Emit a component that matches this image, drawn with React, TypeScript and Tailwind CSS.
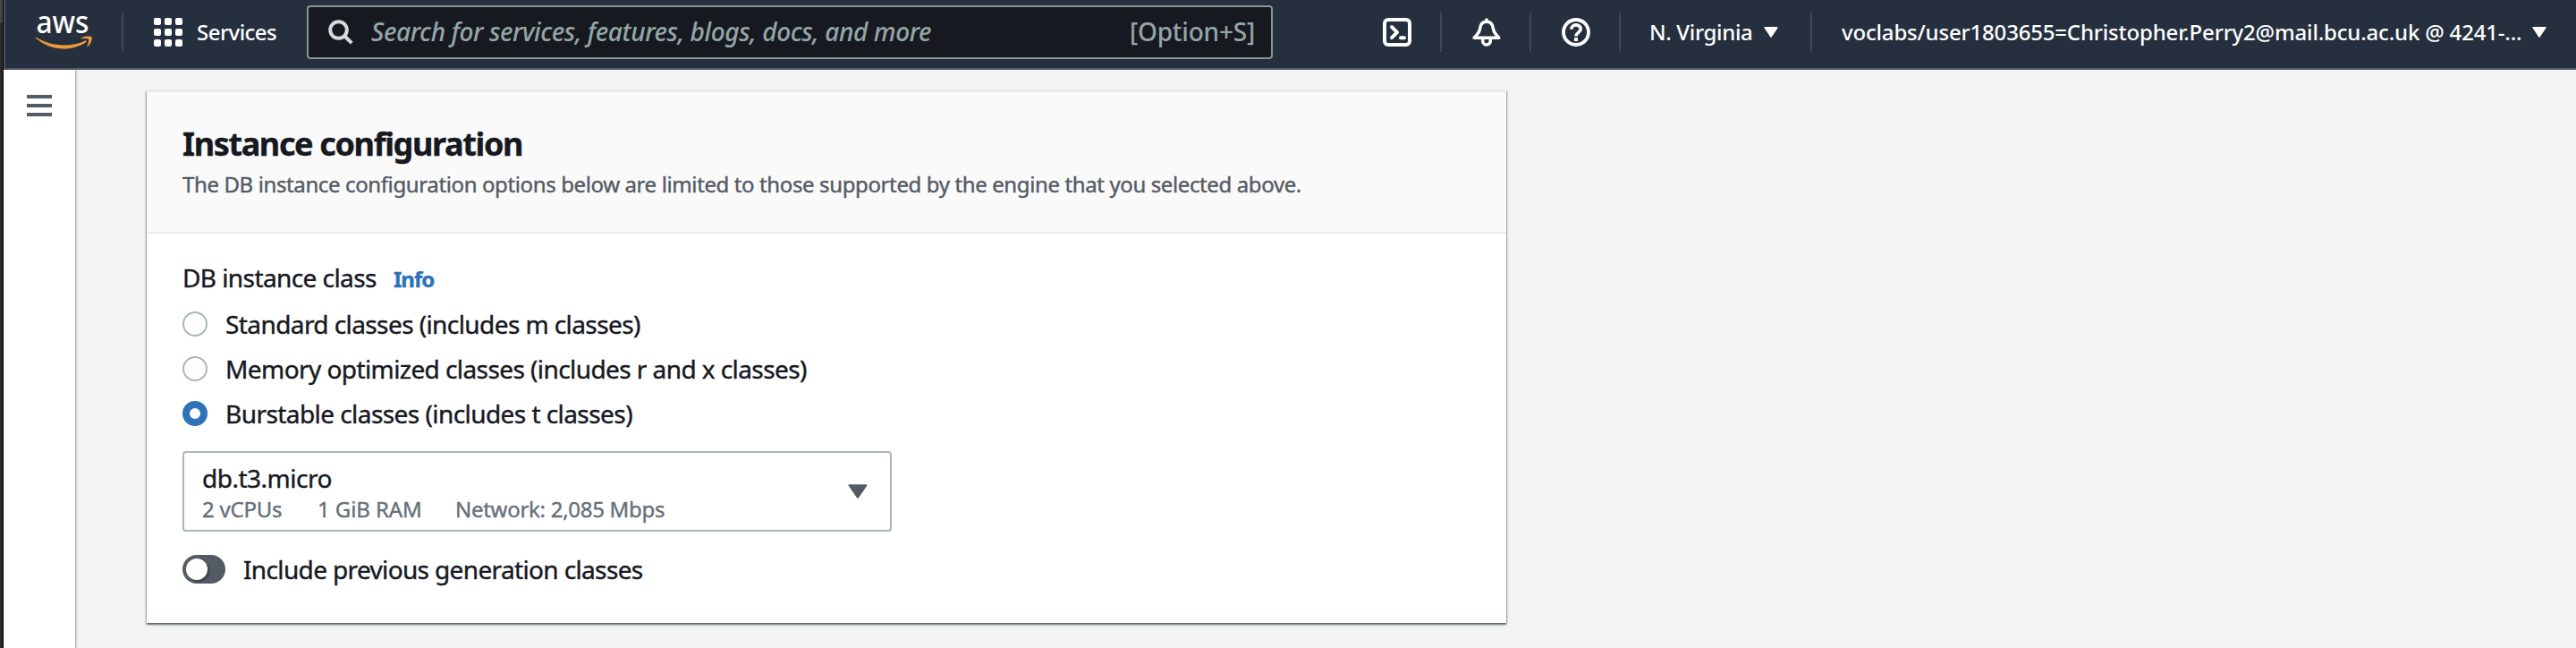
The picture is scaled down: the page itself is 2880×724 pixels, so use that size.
import React from "react";

function Divider() {
  return <div className="h-11 w-[2px] shrink-0 bg-[#414750]" />;
}

function Caret({ className }: { className: string }) {
  return (
    <svg viewBox="0 0 16 12" preserveAspectRatio="none" className={className} fill="currentColor" stroke="currentColor" strokeWidth="1.6" strokeLinejoin="round">
      <path d="M1.2 .9h13.6L8 11z" />
    </svg>
  );
}

function AwsLogo() {
  return (
    <svg viewBox="0 0 68 48" className="h-12 w-[68px] shrink-0 overflow-visible">
      <text x="2.4" y="24.500" textLength="59" lengthAdjust="spacingAndGlyphs" fontSize="34" fill="#fff" className="font-['Noto_Sans',sans-serif] font-medium">
        aws
      </text>
      <path d="M2.3 29.800C12 35.600 22.500 38.400 34 38.400c8 0 16-1.700 23.300-5 1.200-.5 2.100.8 1 1.700C51.500 40 42 42.600 33.500 42.600c-12.300 0-23.200-4.700-31.600-12-.6-.6 0-1.200.4-.8z" fill="#ec9b3b" />
      <path d="M61 32c-1-1.300-6-1.100-7.900-.7-.6.1-.7-.5-.2-.9 3.300-2.500 10.500-2.200 11.600-1.100 1 1.200-.6 7.900-4.300 10.800-.5.5-1 .2-.8-.4.900-2.200 2.400-6.700 1.600-7.700z" fill="#ec9b3b" />
    </svg>
  );
}

function AppsGrid() {
  return (
    <div className="grid h-8 w-8 shrink-0 grid-cols-3 gap-1">
      {Array.from({ length: 9 }, (_, i) => (
        <span key={i} className="h-2 w-2 rounded-[2px] bg-white" />
      ))}
    </div>
  );
}

function TerminalIcon() {
  return (
    <svg viewBox="0 0 32 32" className="h-8 w-8 shrink-0" fill="none" stroke="#fff" strokeWidth="4" strokeLinecap="round" strokeLinejoin="round">
      <rect x="2" y="2" width="28" height="28" rx="4" />
      <path d="M10 10.200l6 6-6 6M20 22.200h4" />
    </svg>
  );
}

function BellIcon() {
  return (
    <svg viewBox="0 0 32 32" className="h-8 w-8 shrink-0" fill="none" stroke="#fff" strokeWidth="3.500" strokeLinejoin="round" strokeLinecap="round">
      <path d="M16 2v2M16 4.200c-4.400 0-6.800 3-7.300 7.300C8.200 16.500 5.500 18.500 2.200 22.200h27.600c-3.300-3.700-6-5.700-6.500-10.700C22.800 7.200 20.400 4.200 16 4.200z" />
      <path d="M11.700 22.500v3.300a4.300 4.300 0 0 0 8.600 0v-3.300" />
    </svg>
  );
}

function HelpIcon() {
  return (
    <svg viewBox="0 0 32 32" className="h-8 w-8 shrink-0" fill="none" stroke="#fff" strokeWidth="3.800">
      <circle cx="16" cy="16" r="14" />
      <path d="M10.800 12.800c0-3 2.200-4.900 5.200-4.900s5.200 1.800 5.200 4.600c0 3.500-5.200 3.800-5.200 8.100" strokeWidth="3.600" />
      <path d="M14 24h4" strokeWidth="4" />
    </svg>
  );
}

function TopBar() {
  return (
    <header className="flex h-[78px] items-center border-b-2 border-l-2 border-b-[#545b64] border-l-[#4a515d] bg-[#262f3e] pb-1 pl-8 text-2xl font-medium whitespace-nowrap text-white">
      <AwsLogo />
      <div className="mr-[34px] ml-[30px]">
        <Divider />
      </div>
      <AppsGrid />
      <span className="ml-4 w-[123px] tracking-[-0.53px]">Services</span>
      <div className="flex h-[60px] w-[1080px] shrink-0 items-center rounded-[4px] border-2 border-[#879596] bg-[#16191f] pr-[18px] pl-[22px] text-[28px] text-[#95a5a6]">
        <svg viewBox="0 0 28 28" className="h-7 w-7 shrink-0" fill="none" stroke="#d5dbdb" strokeWidth="4">
          <circle cx="11.500" cy="11.500" r="9.300" />
          <path d="M18 18l8.200 8.200" />
        </svg>
        <span className="ml-5 tracking-[-0.39px] italic">Search for services, features, blogs, docs, and more</span>
        <span className="ml-auto tracking-[-0.21px]">[Option+S]</span>
      </div>
      <div className="ml-[123px] flex items-center">
        <TerminalIcon />
        <div className="mx-8"><Divider /></div>
        <div className="mr-8 ml-[2px]"><BellIcon /></div>
        <Divider />
        <div className="mr-8 ml-[34px]"><HelpIcon /></div>
        <Divider />
        <span className="ml-8 w-[128px] tracking-[-0.34px]">N. Virginia</span>
        <Caret className="h-3 w-4 shrink-0" />
        <div className="ml-9"><Divider /></div>
        <span className="ml-[33px] w-[772px] tracking-[-0.185px]">voclabs/user1803655=Christopher.Perry2@mail.bcu.ac.uk @ 4241-...</span>
        <Caret className="h-3 w-4 shrink-0" />
      </div>
    </header>
  );
}

function RadioRow({ label, checked, tracking }: { label: string; checked?: boolean; tracking: string }) {
  return (
    <label className="flex h-[50px] items-center">
      <span className={checked ? "h-7 w-7 rounded-full border-8 border-[#2e73b8] bg-white" : "h-7 w-7 rounded-full border-2 border-[#aab7b8] bg-white"} />
      <span className={`ml-5 ${tracking}`}>{label}</span>
    </label>
  );
}

function InstanceConfiguration() {
  return (
    <section className="mt-[23px] ml-20 h-[595px] w-[1520px] border-t-2 border-[#eaeded] bg-white text-[28px] whitespace-nowrap text-[#16191f] shadow-[0_2px_2px_0_rgba(0,28,36,0.5),1px_1px_2px_0_rgba(0,28,36,0.25),-1px_1px_2px_0_rgba(0,28,36,0.25)] [-webkit-text-stroke:0.4px]">
      <div className="h-[158px] border-b-2 border-[#eaeded] bg-[#fafafa] px-10 pt-9">
        <h2 className="text-[36px] leading-[44px] font-bold tracking-[-1.36px]">Instance configuration</h2>
        <p className="mt-[5px] text-2xl leading-9 tracking-[-0.38px] text-[#545b64]">
          The DB instance configuration options below are limited to those supported by the engine that you selected above.
        </p>
      </div>
      <div className="px-10 pt-[29px]">
        <div className="flex h-10 items-baseline leading-10">
          <span className="w-[236px] tracking-[-0.58px]">DB instance class</span>
          <a className="text-2xl leading-10 font-bold tracking-[-1px] text-[#2e73b8]">Info</a>
        </div>
        <div className="mt-[7px]">
          <RadioRow label="Standard classes (includes m classes)" tracking="tracking-[-0.585px]" />
          <RadioRow label="Memory optimized classes (includes r and x classes)" tracking="tracking-[-0.578px]" />
          <RadioRow label="Burstable classes (includes t classes)" checked tracking="tracking-[-0.56px]" />
        </div>
        <div className="mt-[17px] flex h-[90px] w-[793px] items-center justify-between rounded-[4px] border-2 border-[#aab7b8] pr-[25px] pl-5">
          <div className="pt-[3px]">
            <div className="leading-[34px] tracking-[-0.5px]">db.t3.micro</div>
            <div className="mt-0.5 flex text-2xl leading-8 text-[#687078]">
              <span className="w-[129px] tracking-[-0.23px]">2 vCPUs</span>
              <span className="w-[154px] tracking-[-0.09px]">1 GiB RAM</span>
              <span className="tracking-[-0.28px]">Network: 2,085 Mbps</span>
            </div>
          </div>
          <Caret className="h-4 w-[22px] shrink-0 text-[#545b64]" />
        </div>
        <div className="mt-[22px] flex h-10 items-center">
          <span className="flex h-8 w-12 items-center rounded-full bg-[#545b64] pl-1">
            <span className="h-6 w-6 rounded-full bg-white shadow-[2px_2px_2px_0_rgba(0,0,0,0.3)]" />
          </span>
          <span className="ml-5 tracking-[-0.64px]">Include previous generation classes</span>
        </div>
      </div>
    </section>
  );
}

export default function App() {
  return (
    <div className="flex h-[724px] w-[2880px] overflow-hidden font-['Noto_Sans',sans-serif]">
      <div className="w-1 shrink-0 border-r border-black bg-[#2a2a2a]">
        <div className="h-[26px] bg-[#454545]" />
      </div>
      <div className="min-w-0 flex-1">
        <TopBar />
        <div className="flex h-[646px] bg-[#f2f3f3]">
          <nav className="flex w-20 shrink-0 flex-col gap-1.5 bg-white pt-7 pl-[26px] shadow-[1px_0_2px_0_rgba(0,28,36,0.4)]">
            <span className="h-1 w-7 bg-[#545b64]" />
            <span className="h-1 w-7 bg-[#545b64]" />
            <span className="h-1 w-7 bg-[#545b64]" />
          </nav>
          <main>
            <InstanceConfiguration />
          </main>
        </div>
      </div>
    </div>
  );
}
